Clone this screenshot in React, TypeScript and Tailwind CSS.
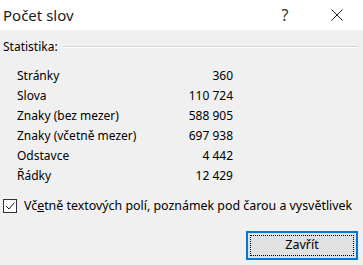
import React from "react";

const rows: [string, string][] = [
  ["Stránky", "360"],
  ["Slova", "110 724"],
  ["Znaky (bez mezer)", "588 905"],
  ["Znaky (včetně mezer)", "697 938"],
  ["Odstavce", "4 442"],
  ["Řádky", "12 429"],
];

export default function App() {
  return (
    <div
      className="w-[363px] h-[265px] bg-[#f0f0f0] text-black overflow-hidden flex flex-col"
      style={{ fontFamily: '"Noto Sans", "Open Sans", sans-serif' }}
    >
      <div className="h-[30px] bg-white flex items-center shrink-0">
        <div className="pl-[3px] text-[15px] leading-none text-[#1a1a1a]">Počet slov</div>
        <div className="ml-auto w-[16px] text-center text-[16px] leading-none mr-[38px] text-[#333]">?</div>
        <svg width="12" height="12" viewBox="0 0 12 12" className="mr-[20px]">
          <path d="M0.5 0.5 L11.5 11.5 M11.5 0.5 L0.5 11.5" stroke="#222" strokeWidth="1" />
        </svg>
      </div>
      <div className="flex items-center mt-[9px] h-[16px] pl-[3px] pr-[5px]">
        <span className="text-[12px] leading-none">Statistika:</span>
        <div className="flex-1 ml-[5px] h-[2px] border-t border-[#d5d5d5] border-b-white border-b" />
      </div>
      <div className="mt-[11px] grid grid-cols-[216px] pl-[17px]">
        {rows.map(([k, v]) => (
          <div key={k} className="flex h-[20px] items-center text-[12px] leading-none">
            <span>{k}</span>
            <span className="ml-auto">{v}</span>
          </div>
        ))}
      </div>
      <div className="flex items-center mt-[12px] pl-[3px] h-[16px]">
        <div className="w-[14px] h-[14px] border border-[#333] bg-white flex items-center justify-center">
          <svg width="10" height="10" viewBox="0 0 10 10">
            <path d="M1 5 L4 8 L9.5 1.5" fill="none" stroke="#222" strokeWidth="1" />
          </svg>
        </div>
        <span className="ml-[7px] text-[12.4px] leading-none">
          Vč<span className="underline">e</span>tně textových polí, poznámek pod čarou a vysvětlivek
        </span>
      </div>
      <div className="flex justify-end pr-[5px] mt-[17px]">
        <button className="w-[112px] h-[29px] border-2 border-[#0078d7] bg-[#e1e1e1] p-[2px]">
          <div className="w-full h-full border border-dotted border-black flex items-center justify-center text-[12.5px] leading-none">
            Zavřít
          </div>
        </button>
      </div>
    </div>
  );
}
